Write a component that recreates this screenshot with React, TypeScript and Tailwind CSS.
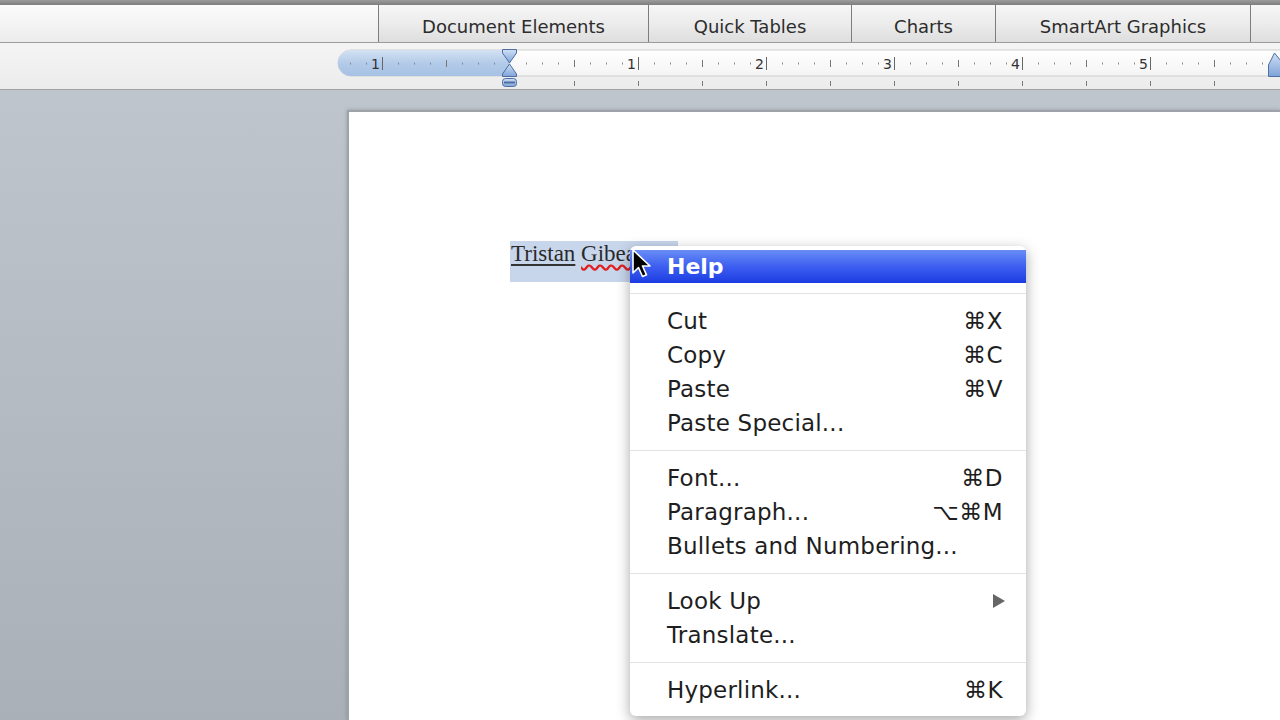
import React from 'react';

const tabs = [
  { label: 'Document Elements', w: 'w-[270px]' },
  { label: 'Quick Tables', w: 'w-[203px]' },
  { label: 'Charts', w: 'w-[144px]' },
  { label: 'SmartArt Graphics', w: 'w-[255px]' },
  { label: '', w: 'w-[60px]' },
];

type Item = { label: string; key?: string; sub?: boolean } | 'sep';

const menu: Item[] = [
  'sep',
  { label: 'Cut', key: '⌘X' },
  { label: 'Copy', key: '⌘C' },
  { label: 'Paste', key: '⌘V' },
  { label: 'Paste Special...' },
  'sep',
  { label: 'Font...', key: '⌘D' },
  { label: 'Paragraph...', key: '⌥⌘M' },
  { label: 'Bullets and Numbering...' },
  'sep',
  { label: 'Look Up', sub: true },
  { label: 'Translate...' },
  'sep',
  { label: 'Hyperlink...', key: '⌘K' },
];

const Ruler = () => {
  const marks: React.ReactNode[] = [];
  for (let x = 350; x < 1272; x += 16) {
    const off = ((x - 382) % 128 + 128) % 128;
    if (x === 510) continue;
    if (off === 0) {
      const n = Math.abs((x - 510) / 128);
      marks.push(
        <g key={x}>
          <text x={x - 2} y={26} textAnchor="end" fontSize={14} fill="#333" fontFamily="DejaVu Sans, sans-serif">
            {n}
          </text>
          <line x1={x + 0.5} x2={x + 0.5} y1={14} y2={27} stroke="#666" strokeWidth={1} />
        </g>
      );
    } else if (off === 64) {
      marks.push(<line key={x} x1={x + 0.5} x2={x + 0.5} y1={17} y2={24} stroke="#777" strokeWidth={1} />);
    } else {
      marks.push(<rect key={x} x={x} y={19.5} width={1} height={2} fill="#8a8a8a" />);
    }
  }
  const lower: React.ReactNode[] = [];
  for (let x = 574; x < 1272; x += 64) {
    lower.push(<line key={x} x1={x + 0.5} x2={x + 0.5} y1={38} y2={43} stroke="#7a7a7a" strokeWidth={1} />);
  }
  return (
    <svg width={1280} height={46} className="block">
      <defs>
        <clipPath id="pill">
          <rect x={338} y={7} width={1000} height={26} rx={13} />
        </clipPath>
        <linearGradient id="blue" x1="0" y1="0" x2="0" y2="1">
          <stop offset="0" stopColor="#d4e2f3" />
          <stop offset="0.5" stopColor="#b3cbe9" />
          <stop offset="1" stopColor="#a6c1e4" />
        </linearGradient>
        <linearGradient id="white" x1="0" y1="0" x2="0" y2="1">
          <stop offset="0" stopColor="#ffffff" />
          <stop offset="1" stopColor="#f4f4f4" />
        </linearGradient>
        <linearGradient id="marker" x1="0" y1="0" x2="0" y2="1">
          <stop offset="0" stopColor="#cfe0f5" />
          <stop offset="1" stopColor="#7fa3d8" />
        </linearGradient>
      </defs>
      <rect x={338} y={7} width={1000} height={26} rx={13} fill="url(#white)" stroke="#cfcfcf" />
      <rect x={338} y={7} width={172} height={26} fill="url(#blue)" clipPath="url(#pill)" />
      {marks}
      {lower}
      {/* first line / hanging indent marker */}
      <path d="M502.5 6.5 H516.5 V10 L509.5 20 L502.5 10 Z" fill="url(#marker)" stroke="#4e6f9f" />
      <path d="M509.5 21 L516.5 31 V33.5 H502.5 V31 Z" fill="url(#marker)" stroke="#4e6f9f" />
      <rect x={502.5} y={35.5} width={14} height={8} rx={3} fill="url(#marker)" stroke="#4e6f9f" />
      <line x1={504} x2={515} y1={39.5} y2={39.5} stroke="#4e6f9f" strokeWidth={2} />
      {/* right indent */}
      <path d="M1274.5 10 L1281 18 V33.5 H1268.5 V22 Z" fill="url(#marker)" stroke="#4e6f9f" />
    </svg>
  );
};

const Cursor = () => (
  <svg
    width={24}
    height={32}
    viewBox="0 0 24 32"
    className="absolute left-[631px] top-[248px]"
  >
    <path
      d="M2 2 L2 25 L7.5 19.5 L11.5 28.5 L15.5 26.8 L11.5 18 L19 18 Z"
      fill="#000"
      stroke="#fff"
      strokeWidth={1.6}
      strokeLinejoin="round"
    />
  </svg>
);

const ContextMenu = () => (
  <div className="absolute left-[630px] top-[246px] w-[396px] rounded-[6px] bg-white pt-[4px] pb-[9px] font-['DejaVu_Sans',sans-serif] shadow-[0_4px_14px_rgba(0,0,0,0.35)]">
    <div className="flex h-[33px] items-center bg-gradient-to-b from-[#6a8cf6] via-[#3d5ef0] to-[#1c3be2] pl-[37px] text-[22px] font-bold text-white">
      Help
    </div>
    {menu.map((item, i) =>
      item === 'sep' ? (
        <div key={i} className="flex h-[21px] items-center">
          <div className="h-px w-full bg-[#e3e3e3]" />
        </div>
      ) : (
        <div key={i} className="flex h-[34px] items-center justify-between pl-[37px] pr-[23px] text-[23px] tracking-[0.2px] text-[#1e1e1e]">
          <span>{item.label}</span>
          {item.key && <span className="tracking-[0.5px]">{item.key}</span>}
          {item.sub && (
            <svg width={14} height={16} viewBox="0 0 14 16" className="mr-[-3px]">
              <path d="M1 1 L13 8 L1 15 Z" fill="#666" />
            </svg>
          )}
        </div>
      )
    )}
  </div>
);

export default function App() {
  return (
    <div className="relative flex h-[720px] w-[1280px] flex-col overflow-hidden bg-[#bac0c8] font-['DejaVu_Sans',sans-serif]">
      <div className="h-[5px] bg-gradient-to-b from-[#9c9c9c] to-[#7d7d7d]" />
      <div className="flex h-[38px] border-b border-[#9b9b9b] bg-gradient-to-b from-[#fbfbfb] to-[#ececec]">
        <div className="w-[378px] shrink-0" />
        {tabs.map((t) => (
          <div
            key={t.label + t.w}
            className={`${t.w} flex shrink-0 items-center justify-center border-l border-[#7d7d7d] bg-gradient-to-b from-[#f6f6f6] via-[#ececec] to-[#dedede] pt-[5px] text-[18px] text-[#2c2c2c]`}
          >
            {t.label}
          </div>
        ))}
      </div>
      <div className="h-[47px] border-b border-[#a3a3a3] bg-gradient-to-b from-[#f4f4f4] to-[#ececec]">
        <Ruler />
      </div>
      <div className="flex flex-1 bg-gradient-to-b from-[#bfc5cd] to-[#a9b0b8] pt-[20px] pl-[347px]">
        <div className="flex-1 border-l-2 border-t-2 border-[#9ea3a9] bg-white shadow-[0_0_4px_rgba(0,0,0,0.2)]">
          <div className="mt-[129px] ml-[161px] flex">
            <span className="flex h-[41px] items-start bg-[#c8d6ec] pl-[1px] pr-[30px] pt-[0px] font-['Liberation_Serif',serif] text-[23px] leading-[26px] text-[#2a2a2a]">
              <span className="underline decoration-[#333] underline-offset-[3px]">Tristan</span>
              <span>&nbsp;</span>
              <span className="underline decoration-wavy decoration-[#e02020] underline-offset-[3px]">Gibeau</span>
            </span>
          </div>
        </div>
      </div>
      <ContextMenu />
      <Cursor />
    </div>
  );
}
